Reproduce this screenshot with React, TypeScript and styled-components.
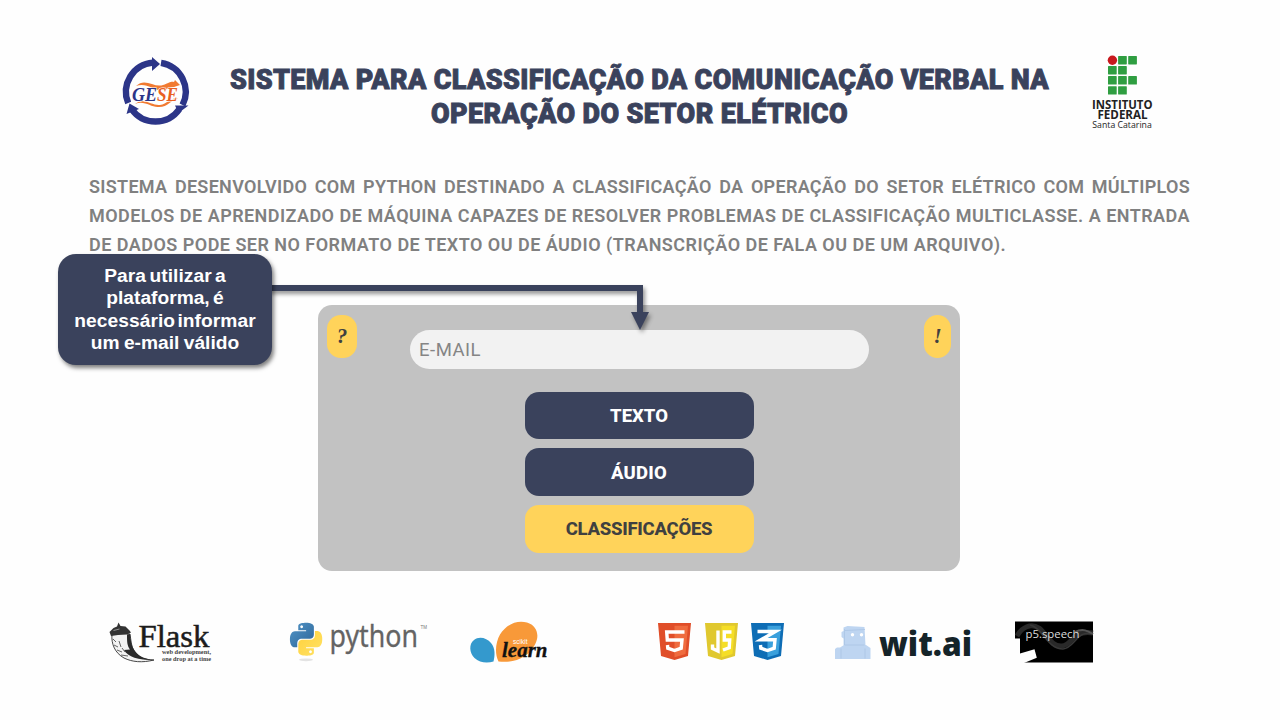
import React from "react";
import styled, { createGlobalStyle } from "styled-components";

const navy = "#3a425c";
const yellow = "#ffd35a";

const GlobalStyle = createGlobalStyle`
  * { box-sizing: border-box; }
  body { margin: 0; background: #fff; }
`;

const Page = styled.div`
  position: relative;
  display: flex;
  flex-direction: column;
  width: 1280px;
  height: 720px;
  overflow: hidden;
  background: #fefefe;
  font-family: Roboto, "Liberation Sans", sans-serif;
`;

const Header = styled.header`
  display: flex;
  align-items: flex-start;
  height: 172px;
  padding: 54px 126px 0 120px;
`;

const Title = styled.h1`
  flex: 1;
  margin: 9px 0 0;
  padding-right: 1px;
  color: ${navy};
  font-size: 27px;
  font-weight: 900;
  line-height: 34px;
  text-align: center;
  white-space: nowrap;
  -webkit-text-stroke: 0.9px ${navy};
`;

const TitleLine = styled.span<{ $spacing: number }>`
  display: block;
  letter-spacing: ${(p) => p.$spacing}px;
`;

const Intro = styled.section`
  width: 1101px;
  height: 133px;
  margin-left: 89px;
  color: #808080;
  font-size: 18px;
  font-weight: 600;
  line-height: 29.2px;
`;

const IntroLine = styled.div<{ $spacing: number; $last?: boolean }>`
  white-space: nowrap;
  text-align: justify;
  text-align-last: ${(p) => (p.$last ? "left" : "justify")};
  letter-spacing: ${(p) => p.$spacing}px;
`;

const Panel = styled.main`
  display: grid;
  grid-template-columns: 30px 1fr 27px;
  align-items: flex-start;
  width: 642px;
  height: 266px;
  margin-left: 318px;
  padding: 9.5px 9px 0;
  border-radius: 14px;
  background: #c2c2c2;
`;

const HintButton = styled.button`
  height: 43px;
  padding: 0;
  border: 0;
  border-radius: 14px;
  background: ${yellow};
  color: #404040;
  font: italic bold 21px "Liberation Serif", serif;
`;

const Form = styled.form`
  display: flex;
  flex-direction: column;
  align-items: center;
  padding: 15.5px 3px 0 0;
`;

const EmailInput = styled.input`
  width: 459px;
  height: 39px;
  margin-bottom: 22.5px;
  padding: 0 9.5px;
  border: 0;
  border-radius: 20px;
  background: #f2f2f2;
  color: #757575;
  font: 18.5px Roboto, sans-serif;
  letter-spacing: 0.5px;
  &::placeholder { color: #858585; opacity: 1; }
`;

const ActionButton = styled.button<{ $accent?: boolean; $spacing?: number }>`
  width: 229px;
  height: 47.5px;
  margin-bottom: 9.3px;
  padding: 1px 0 0;
  border: 0;
  border-radius: 14px;
  background: ${(p) => (p.$accent ? yellow : navy)};
  color: ${(p) => (p.$accent ? "#404040" : "#fff")};
  font: 800 18.5px Roboto, sans-serif;
  letter-spacing: ${(p) => p.$spacing ?? 0}px;
`;

const Partners = styled.footer`
  display: flex;
  align-items: flex-start;
  padding: 45px 0 0 104px;
`;

const Logo = styled.svg<{ $gap?: number }>`
  display: block;
  flex: none;
  margin-left: ${(p) => p.$gap ?? 0}px;
  overflow: visible;
`;

const Shields = styled.div`
  display: flex;
  gap: 13.4px;
  margin: 6.5px 0 0 103.3px;
`;

const ShieldSvg = styled.svg`
  display: block;
  width: 33px;
  height: 37px;
`;

const Callout = styled.aside`
  position: absolute;
  left: 58px;
  top: 254px;
  width: 214px;
  height: 111px;
  padding-top: 11px;
  border-radius: 18px;
  background: ${navy};
  box-shadow: 2px 3px 4px rgba(0, 0, 0, 0.5);
  color: #fff;
  font: bold 19.2px/22.3px "Liberation Sans", sans-serif;
  text-align: center;
`;

const CalloutLine = styled.div<{ $spacing?: number; $words?: number }>`
  white-space: nowrap;
  letter-spacing: ${(p) => p.$spacing ?? 0}px;
  word-spacing: ${(p) => p.$words ?? -2}px;
`;

const Connector = styled.svg`
  position: absolute;
  left: 268px;
  top: 280px;
  filter: drop-shadow(2px 3px 2px rgba(0, 0, 0, 0.42));
`;

function GeseLogo() {
  return (
    <Logo width="72" height="74" viewBox="120 54 72 74">
      <g fill="none" stroke="#2c3588" strokeWidth="6.4">
        <path d="M128.2 103A29.3 29.3 0 0 1 153 62.6" />
        <path d="M161 62.8A29.3 29.3 0 0 1 182.5 105" />
        <path d="M179.5 109A29.3 29.3 0 0 1 131.5 109" />
      </g>
      <g fill="#2c3588">
        <path d="M152 57 160 64 152 71Z" />
        <path d="M175 105.5 188.5 105.5 178.5 113Z" />
        <path d="M126.5 114 129.5 103.5 139 109Z" />
      </g>
      <path d="M136 86c9-9 18 2 27-1 6-2 8-4 11-3l1-2 5 5-6 2c-4 0-7 3-12 3-9 1-15-8-26-4Z" fill="#f17a31" />
      <path d="M135 104c9-7 17 2 25 1 7-1 10-7 18-7-7 2-10 9-19 9-8 1-14-7-24-3Z" fill="#f17a31" />
      <text x="132" y="100.5" fontFamily="Liberation Serif, serif" fontSize="18" fontWeight="bold" fontStyle="italic" textLength="25" lengthAdjust="spacingAndGlyphs" fill="#2c3588" stroke="#fff" strokeWidth="1.2" paintOrder="stroke">GE</text>
      <text x="157" y="100.5" fontFamily="Liberation Serif, serif" fontSize="18" fontWeight="bold" fontStyle="italic" textLength="21" lengthAdjust="spacingAndGlyphs" fill="#e96021" stroke="#fff" strokeWidth="1.2" paintOrder="stroke">SE</text>
    </Logo>
  );
}

const ifCells = [
  [1, 0], [2, 0], [0, 1], [1, 1], [0, 2], [1, 2], [2, 2], [0, 3], [1, 3],
];

function InstitutoLogo() {
  return (
    <Logo width="66" height="78" viewBox="1088 54 66 78">
      <circle cx="1112.4" cy="60.2" r="4.7" fill="#c8191e" />
      {ifCells.map(([c, r]) => (
        <rect key={`${c}-${r}`} x={1108 + c * 10.1} y={56 + r * 10.05} width="8.7" height="8.4" rx="0.6" fill="#2f9e41" />
      ))}
      <g fontFamily="Open Sans, sans-serif" fill="#222">
        <text x="1092" y="108.6" fontSize="11.5" fontWeight="700" textLength="60.5" lengthAdjust="spacingAndGlyphs">INSTITUTO</text>
        <text x="1097.5" y="118.6" fontSize="11.5" fontWeight="700" textLength="50" lengthAdjust="spacingAndGlyphs">FEDERAL</text>
        <text x="1092.3" y="128" fontSize="9" textLength="59.5" lengthAdjust="spacingAndGlyphs">Santa Catarina</text>
      </g>
    </Logo>
  );
}

function FlaskLogo() {
  return (
    <Logo width="110" height="50" viewBox="104 616 110 50">
      <path d="M112 634c-1 10 3 19 12 24 8 4 18 5 30 2-10 0-16-3-20-9-3-5-3-11-4-17Z" fill="#f2f2f2" stroke="#333" strokeWidth=".9" />
      <path d="M124 650c4 7 14 10 30 10-8-1-15-3-19-9-4-5-4-11-5-17l-3 .5c0 7 0 11 3 15Z" fill="#2a2a2a" />
      <path d="m109.500 632 4-4 3.500-1.500 1.500-4 2 3.500 5 .5 4 4 1.500 2-3 1.500-10 1-7 1Z" fill="#333" />
      <path d="M113 639l3 3M114 645l4 2M117 650l5 2M121 655l7 1M119 641l2 6M122 648l3 4" stroke="#555" strokeWidth=".9" />
      <path d="M113.500 630.500l6-1.500" stroke="#aaa" strokeWidth=".8" />
      <text x="138.5" y="647" fontFamily="Liberation Serif, serif" fontSize="31" textLength="71" lengthAdjust="spacingAndGlyphs" fill="#1c1c1c" stroke="#1c1c1c" strokeWidth=".5">Flask</text>
      <g fontFamily="Liberation Serif, serif" fontSize="5.8" fontWeight="bold" fill="#444">
        <text x="162" y="654.3" textLength="49" lengthAdjust="spacingAndGlyphs">web development,</text>
        <text x="162" y="661" textLength="49" lengthAdjust="spacingAndGlyphs">one drop at a time</text>
      </g>
    </Logo>
  );
}

const snake =
  "M14.25.18l.9.2.73.26.59.3.45.32.34.34.25.34.16.33.1.3.04.26.02.2-.01.13V8.5l-.05.63-.13.55-.21.46-.26.38-.3.31-.33.25-.35.19-.35.14-.33.1-.3.07-.26.04-.21.02H8.77l-.69.05-.59.14-.5.22-.41.27-.33.32-.27.35-.2.36-.15.37-.1.35-.07.32-.04.27-.02.21v3.06H3.17l-.21-.03-.28-.07-.32-.12-.35-.18-.36-.26-.36-.36-.35-.46-.32-.59-.28-.73-.21-.88-.14-1.05-.05-1.23.06-1.22.16-1.04.24-.87.32-.71.36-.57.4-.44.42-.33.42-.24.4-.16.36-.1.32-.05.24-.01h.16l.06.01h8.16v-.83H6.18l-.01-2.75-.02-.37.05-.34.11-.31.17-.28.25-.26.31-.23.38-.2.44-.18.51-.15.58-.12.64-.1.71-.06.77-.04.84-.02 1.27.05zm-6.3 1.98l-.23.33-.08.41.08.41.23.34.33.22.41.09.41-.09.33-.22.23-.34.08-.41-.08-.41-.23-.33-.33-.22-.41-.09-.41.09z";

function PythonLogo() {
  return (
    <Logo width="144" height="50" viewBox="286 616 144 50" $gap={72}>
      <defs>
        <linearGradient id="pyBlue" x1="0" y1="0" x2="1" y2="1">
          <stop offset="0" stopColor="#5295c8" />
          <stop offset="1" stopColor="#2d6597" />
        </linearGradient>
        <linearGradient id="pyYellow" x1="1" y1="1" x2="0" y2="0">
          <stop offset="0" stopColor="#ffd13c" />
          <stop offset="1" stopColor="#ffe265" />
        </linearGradient>
      </defs>
      <ellipse cx="306" cy="659.8" rx="7" ry="1.4" fill="#e3e3e3" />
      <g transform="translate(290 622.8) scale(1.34 1.37)">
        <path d={snake} fill="url(#pyBlue)" />
        <path d={snake} fill="url(#pyYellow)" transform="rotate(180 12 12)" />
      </g>
      <text x="329.5" y="646.8" fontFamily="Noto Sans, sans-serif" fontSize="31" textLength="88.5" lengthAdjust="spacingAndGlyphs" fill="#646464" stroke="#646464" strokeWidth=".3">python</text>
      <text x="420.5" y="628.5" fontFamily="Liberation Sans, sans-serif" fontSize="4.5" textLength="6.5" lengthAdjust="spacingAndGlyphs" fill="#777">TM</text>
    </Logo>
  );
}

function ScikitLogo() {
  return (
    <Logo width="90" height="50" viewBox="465 616 90 50" $gap={35}>
      <path d="M474 640c5-4 13-2 17 3 4.500 5 4 13 2.500 18.500-6 2-14 1.500-19-3.500-5-5-6-14-.5-18Z" fill="#3499cd" />
      <path d="M498.500 661.500c-4-8-3-19 1.500-27 6-10 17-15 27-12 10 3 13 13 8 22-6 12-19 19-36.500 17Z" fill="#f89939" />
      <text x="513" y="644" fontFamily="Liberation Sans, sans-serif" fontSize="6.5" textLength="14.5" lengthAdjust="spacingAndGlyphs" fill="#fff">scikit</text>
      <text x="502" y="656.5" fontFamily="Liberation Serif, serif" fontSize="20" fontStyle="italic" fontWeight="bold" textLength="45.5" lengthAdjust="spacingAndGlyphs" fill="#111" stroke="#111" strokeWidth=".3">learn</text>
    </Logo>
  );
}

const shields = [
  { label: "HTML5", dark: "#e04e29", light: "#ef6c3f", marks: ["M26.500 9H8.700L9.300 17H24L23.200 25.200 16.500 27.500 9.800 25.200 9.500 22"] },
  { label: "JavaScript", dark: "#e0c82f", light: "#f5de26", marks: ["M13 7.500V28L7.500 25.500V21.500", "M26.500 9H19.300V17H24.700L24.200 24.800 18 27"] },
  { label: "CSS3", dark: "#0e6db5", light: "#3aa0dc", marks: ["M6.500 8.500H24.500L10 16.800H24L23.200 25.200 16.500 27.500 9.800 25.200 9.500 22"] },
];

function WitLogo() {
  return (
    <Logo width="144" height="50" viewBox="831 616 144 50" $gap={47.3}>
      <g fill="#bed5f1">
        <path d="M841.5 637v-5l2-1v-3.500l4-1.500 17 1 1 18.500h-22v-7Z" />
        <path d="M835 649l2-1.500h3l4-2.500h22l4.500 3v11H835Z" />
      </g>
      <path d="M844.5 629v16h20M841 648.500v10M865 648.500v10M845 630.500l20-1" fill="none" stroke="#a9c4e5" strokeWidth=".8" />
      <circle cx="852.5" cy="634.8" r="1.7" fill="#fff" />
      <circle cx="861.5" cy="634.8" r="1.7" fill="#fff" />
      <text x="879" y="655.5" fontFamily="Noto Sans, sans-serif" fontSize="33" fontWeight="900" textLength="93" lengthAdjust="spacingAndGlyphs" fill="#152429">wit.ai</text>
    </Logo>
  );
}

function SpeechLogo() {
  return (
    <Logo width="78" height="50" viewBox="1015 616 78 50" $gap={40}>
      <rect x="1015" y="621.5" width="78" height="41" fill="#000" />
      <g fill="none">
        <path d="M1017 636c5-9 14-13 22-8 8 6 12 19 23 18 11-1 9-16 31-13" stroke="#292929" strokeWidth="5" />
        <path d="M1030 625c12 2 17 24 33 24 12-1 14-20 30-15" stroke="#383838" strokeWidth="1.5" />
        <path d="M1075 632c8-4 13-1 18 2" stroke="#555" strokeWidth="2" />
      </g>
      <path d="M1014.5 638.500H1020V653.500L1034.500 649.300 1036.800 657.800 1024 663H1014.500Z" fill="#fefefe" />
      <text x="1025.5" y="638.3" fontFamily="Open Sans, sans-serif" fontSize="10.5" textLength="54" lengthAdjust="spacingAndGlyphs" fill="#ddd">p5.speech</text>
    </Logo>
  );
}

export default function App() {
  return (
    <Page>
      <GlobalStyle />
      <Header>
        <GeseLogo />
        <Title>
          <TitleLine $spacing={0.33}>SISTEMA PARA CLASSIFICAÇÃO DA COMUNICAÇÃO VERBAL NA</TitleLine>
          <TitleLine $spacing={0.37}>OPERAÇÃO DO SETOR ELÉTRICO</TitleLine>
        </Title>
        <InstitutoLogo />
      </Header>
      <Intro>
        <IntroLine $spacing={0.3}>SISTEMA DESENVOLVIDO COM PYTHON DESTINADO A CLASSIFICAÇÃO DA OPERAÇÃO DO SETOR ELÉTRICO COM MÚLTIPLOS</IntroLine>
        <IntroLine $spacing={0.44}>MODELOS DE APRENDIZADO DE MÁQUINA CAPAZES DE RESOLVER PROBLEMAS DE CLASSIFICAÇÃO MULTICLASSE. A ENTRADA</IntroLine>
        <IntroLine $spacing={0.47} $last>DE DADOS PODE SER NO FORMATO DE TEXTO OU DE ÁUDIO (TRANSCRIÇÃO DE FALA OU DE UM ARQUIVO).</IntroLine>
      </Intro>
      <Panel>
        <HintButton>?</HintButton>
        <Form>
          <EmailInput placeholder="E-MAIL" />
          <ActionButton type="button">TEXTO</ActionButton>
          <ActionButton type="button" $spacing={0.2}>ÁUDIO</ActionButton>
          <ActionButton type="button" $accent $spacing={-0.25}>CLASSIFICAÇÕES</ActionButton>
        </Form>
        <HintButton>!</HintButton>
      </Panel>
      <Partners>
        <FlaskLogo />
        <PythonLogo />
        <ScikitLogo />
        <Shields>
          {shields.map((s) => (
            <ShieldSvg key={s.label} viewBox="0 0 33 37" aria-label={s.label}>
              <path d="M0 0H33L30 33 16.500 37 3 33Z" fill={s.dark} />
              <path d="M16.500 2.800H30L27.500 31 16.500 34.200Z" fill={s.light} />
              {s.marks.map((d) => (
                <path key={d} d={d} fill="none" stroke="#fff" strokeWidth="3.4" />
              ))}
            </ShieldSvg>
          ))}
        </Shields>
        <WitLogo />
        <SpeechLogo />
      </Partners>
      <Connector width="390" height="60" viewBox="268 280 390 60">
        <path d="M268 285H643V312H649L640 330 631 312H637V291H268Z" fill={navy} />
      </Connector>
      <Callout>
        <CalloutLine $spacing={0.05}>Para utilizar a</CalloutLine>
        <CalloutLine $words={-2}>plataforma, é</CalloutLine>
        <CalloutLine $spacing={0.05} $words={-3}>necessário informar</CalloutLine>
        <CalloutLine $words={-1}>um e-mail válido</CalloutLine>
      </Callout>
    </Page>
  );
}
